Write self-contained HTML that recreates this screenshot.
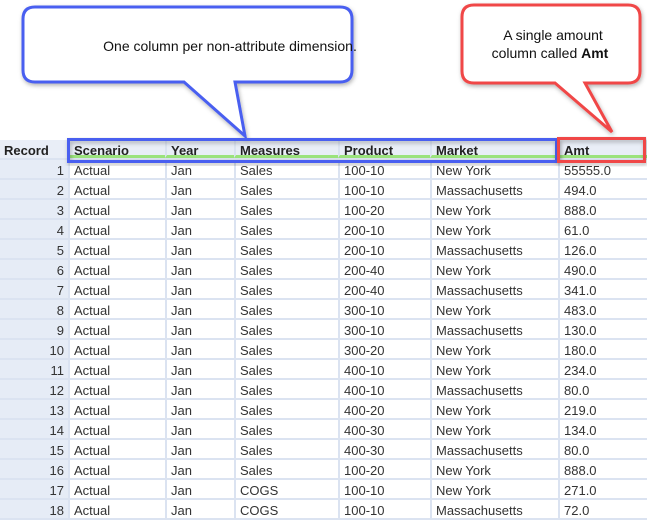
<!DOCTYPE html>
<html><head><meta charset="utf-8"><style>
body{margin:0;width:647px;height:520px;overflow:hidden;background:#fff;font-family:"Liberation Sans",Arial,sans-serif;position:relative}
.g{position:absolute;left:0;top:140px;width:647px}
.r{position:absolute;left:0;width:647px;height:20px;border-bottom:2px solid #dbe3f1;box-sizing:border-box}
.c{position:absolute;top:0;height:18px;line-height:21px;font-size:13px;color:#333;border-left:2px solid #dbe3f1;padding-left:4px;box-sizing:border-box;white-space:nowrap}
.n{position:absolute;left:0;top:0;width:68px;height:18px;background:#e6ecf6;text-align:right;padding-right:4px;box-sizing:border-box;font-size:13px;line-height:21px;color:#333}
.h{background:#e9eef7}
.h .c{font-weight:bold;color:#222;border-bottom:3px solid #9be37c;height:18px;top:0}
</style></head><body>
<div class="g" id="g"></div>
<svg width="647" height="520" style="position:absolute;left:0;top:0">
<defs><filter id="s" x="-10%" y="-10%" width="120%" height="130%"><feDropShadow dx="1" dy="2" stdDeviation="2" flood-opacity="0.3"/></filter></defs>
<path d="M35,7 H340 Q352,7 352,19 V70 Q352,82 340,82 H235 L245,136 L184,82 H35 Q23,82 23,70 V19 Q23,7 35,7 Z" fill="#fff" stroke="#4a5ef0" stroke-width="3" filter="url(#s)"/>
<path d="M474,5 H628 Q640,5 640,17 V71 Q640,83 628,83 H585 L612,132 L555,83 H474 Q462,83 462,71 V17 Q462,5 474,5 Z" fill="#fff" stroke="#f04646" stroke-width="3" filter="url(#s)"/>
<text x="230" y="51" text-anchor="middle" font-family="Liberation Sans, Arial, sans-serif" font-size="14" fill="#111">One column per non-attribute dimension.</text>
<text x="553" y="40" text-anchor="middle" font-family="Liberation Sans, Arial, sans-serif" font-size="14" fill="#111">A single amount</text>
<text x="550" y="58" text-anchor="middle" font-family="Liberation Sans, Arial, sans-serif" font-size="14" fill="#111">column called <tspan font-weight="bold">Amt</tspan></text>
<rect x="68.5" y="139.5" width="488" height="22" fill="none" stroke="#4a5ef0" stroke-width="3" filter="url(#s)"/>
<rect x="558.5" y="138.5" width="86" height="23" fill="none" stroke="#f04646" stroke-width="3" filter="url(#s)"/>
</svg>
<script>
var cols=[68,165,234,338,430,558,647];
var hd=["Scenario","Year","Measures","Product","Market","Amt"];
var d=[["100-10","New York","55555.0"],["100-10","Massachusetts","494.0"],["100-20","New York","888.0"],["200-10","New York","61.0"],["200-10","Massachusetts","126.0"],["200-40","New York","490.0"],["200-40","Massachusetts","341.0"],["300-10","New York","483.0"],["300-10","Massachusetts","130.0"],["300-20","New York","180.0"],["400-10","New York","234.0"],["400-10","Massachusetts","80.0"],["400-20","New York","219.0"],["400-30","New York","134.0"],["400-30","Massachusetts","80.0"],["100-20","New York","888.0"],["100-10","New York","271.0"],["100-10","Massachusetts","72.0"]];
var h='<div class="r h" style="top:0"><div class="n" style="text-align:left;padding-left:4px;font-weight:bold;color:#222;background:#e9eef7">Record</div>';
for(var i=0;i<6;i++)h+='<div class="c" style="left:'+cols[i]+'px;width:'+(cols[i+1]-cols[i])+'px">'+hd[i]+'</div>';
h+='</div>';
for(var r=0;r<18;r++){var v=["Actual","Jan",r<16?"Sales":"COGS",d[r][0],d[r][1],d[r][2]];
h+='<div class="r" style="top:'+(20+r*20)+'px"><div class="n">'+(r+1)+'</div>';
for(var i=0;i<6;i++)h+='<div class="c" style="left:'+cols[i]+'px;width:'+(cols[i+1]-cols[i])+'px">'+v[i]+'</div>';
h+='</div>';}
document.getElementById('g').innerHTML=h;
</script>
</body></html>
